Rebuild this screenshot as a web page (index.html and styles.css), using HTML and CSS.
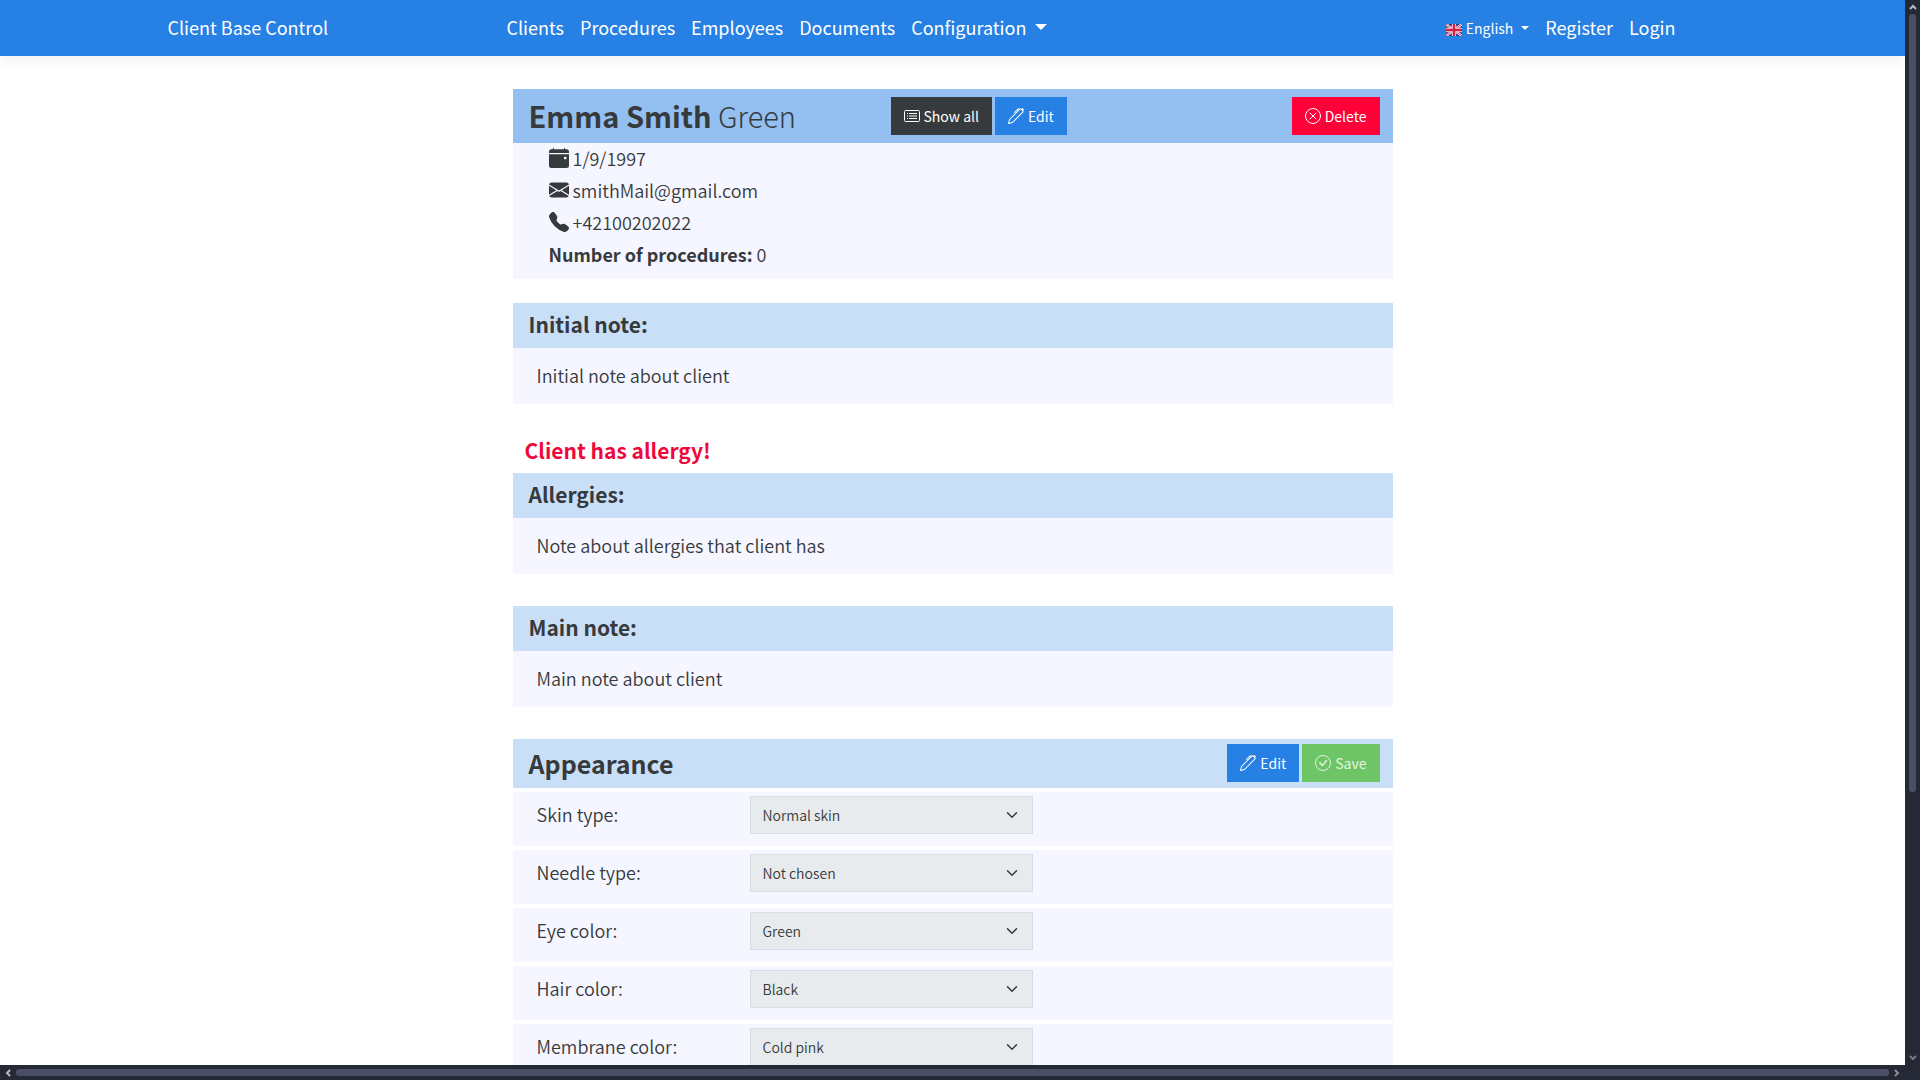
FILE: index.html
```html
<!DOCTYPE html>
<html lang="en">
<head>
<meta charset="utf-8">
<title>Client Base Control</title>
<link rel="stylesheet" href="styles.css">
</head>
<body>
<svg class="sprite" aria-hidden="true">
  <symbol id="calendar" viewBox="0 0 16 16"><path d="M4 .5a.5.5 0 0 0-1 0V1H2a2 2 0 0 0-2 2v1h16V3a2 2 0 0 0-2-2h-1V.5a.5.5 0 0 0-1 0V1H4V.5zM16 14V5H0v9a2 2 0 0 0 2 2h12a2 2 0 0 0 2-2zm-3.500-7h1a.5.5 0 0 1 .5.5v1a.5.5 0 0 1-.5.5h-1a.5.5 0 0 1-.5-.5v-1a.5.5 0 0 1 .5-.5z"/></symbol>
  <symbol id="envelope" viewBox="0 0 16 16"><path d="M.05 3.555A2 2 0 0 1 2 2h12a2 2 0 0 1 1.950 1.555L8 8.414.05 3.555zM0 4.697v7.104l5.803-3.558L0 4.697zM6.761 8.830l-6.570 4.027A2 2 0 0 0 2 14h12a2 2 0 0 0 1.808-1.144l-6.570-4.027L8 9.586l-1.239-.757zm3.436-.586L16 11.801V4.697l-5.803 3.546z"/></symbol>
  <symbol id="phone" viewBox="0 0 16 16"><path d="M1.885.511a1.745 1.745 0 0 1 2.610.163L6.290 2.980c.329.423.445.974.315 1.494l-.547 2.190a.678.678 0 0 0 .178.643l2.457 2.457a.678.678 0 0 0 .644.178l2.189-.547a1.745 1.745 0 0 1 1.494.315l2.306 1.794c.829.645.905 1.870.163 2.611l-1.034 1.034c-.74.74-1.846 1.065-2.877.702a18.634 18.634 0 0 1-7.010-4.420 18.634 18.634 0 0 1-4.420-7.009c-.362-1.030-.037-2.137.703-2.877L1.885.511z"/></symbol>
  <symbol id="list" viewBox="0 0 16 16"><rect x=".5" y="2.500" width="15" height="11" rx="1" fill="none" stroke="currentColor"/><path d="M5 5.500h8M5 8h8M5 10.500h8M3 5.500h1M3 8h1M3 10.500h1" stroke="currentColor"/></symbol>
  <symbol id="pen" viewBox="0 0 16 16"><path d="m13.498.795.149-.149a1.207 1.207 0 1 1 1.707 1.708l-.149.148a1.500 1.500 0 0 1-.059 2.059L4.854 14.854a.5.5 0 0 1-.233.131l-4 1a.5.5 0 0 1-.606-.606l1-4a.5.5 0 0 1 .131-.232l9.642-9.642a.5.5 0 0 0-.642.056L6.854 4.854a.5.5 0 1 1-.708-.708L9.440.854A1.500 1.500 0 0 1 11.500.796a1.500 1.500 0 0 1 1.998-.001zm-.644.766a.5.5 0 0 0-.707 0L1.950 11.756l-.764 3.057 3.057-.764L14.440 3.854a.5.5 0 0 0 0-.708l-1.585-1.585z"/></symbol>
  <symbol id="cross" viewBox="0 0 16 16"><g fill="none" stroke="currentColor" stroke-linecap="round"><circle cx="8" cy="8" r="7.500"/><path d="M5 5l6 6M11 5l-6 6"/></g></symbol>
  <symbol id="check" viewBox="0 0 16 16"><circle cx="8" cy="8" r="7.500" fill="none" stroke="currentColor"/><path d="M10.970 4.970a.235.235 0 0 0-.02.022L7.477 9.417 5.384 7.323a.75.75 0 0 0-1.060 1.060L6.970 11.030a.75.75 0 0 0 1.079-.02l3.992-4.990a.75.75 0 0 0-1.071-1.050z"/></symbol>
  <symbol id="up" viewBox="0 0 8 6"><path d="M1 5l3-3 3 3" fill="none" stroke="currentColor" stroke-width="2"/></symbol>
  <symbol id="flag" viewBox="0 0 16 12"><path fill="#1b2a78" d="M0 0h16v12H0z"/><path d="M0 0l16 12M16 0L0 12" stroke="#f3dbe4" stroke-width="2.600"/><path d="M0 0l16 12M16 0L0 12" stroke="#d8506c" stroke-width="1"/><path d="M8 0v12M0 6h16" stroke="#f3dbe4" stroke-width="4.400"/><path d="M8 0v12M0 6h16" stroke="#d6203f" stroke-width="2.400"/></symbol>
</svg>
<div class="window">
  <div class="page">
    <header class="navbar">
      <div class="navbar-inner">
        <a class="brand" href="#">Client Base Control</a>
        <nav class="menu">
          <a href="#">Clients</a>
          <a href="#">Procedures</a>
          <a href="#">Employees</a>
          <a href="#">Documents</a>
          <button class="toggle" type="button">Configuration<span class="caret"></span></button>
        </nav>
        <div class="menu account">
          <button class="toggle language" type="button"><svg class="flag"><use href="#flag"/></svg>English<span class="caret"></span></button>
          <a href="#">Register</a>
          <a href="#">Login</a>
        </div>
      </div>
    </header>
    <main class="content">
      <section class="client">
        <div class="client-head">
          <h1><strong>Emma Smith</strong> Green</h1>
          <div class="actions">
            <button class="btn dark" type="button"><svg><use href="#list"/></svg>Show all</button>
            <button class="btn primary" type="button"><svg><use href="#pen"/></svg>Edit</button>
          </div>
          <button class="btn danger" type="button"><svg><use href="#cross"/></svg>Delete</button>
        </div>
        <ul class="contact">
          <li><svg><use href="#calendar"/></svg>1/9/1997</li>
          <li><svg><use href="#envelope"/></svg>smithMail@gmail.com</li>
          <li><svg><use href="#phone"/></svg>+42100202022</li>
          <li><span><strong>Number of procedures:</strong> 0</span></li>
        </ul>
      </section>
      <section class="note">
        <h2>Initial note:</h2>
        <p>Initial note about client</p>
      </section>
      <p class="alert">Client has allergy!</p>
      <section class="note">
        <h2>Allergies:</h2>
        <p>Note about allergies that client has</p>
      </section>
      <section class="note">
        <h2>Main note:</h2>
        <p>Main note about client</p>
      </section>
      <form class="appearance">
        <div class="appearance-head">
          <h2>Appearance</h2>
          <div class="actions">
            <button class="btn primary" type="button"><svg><use href="#pen"/></svg>Edit</button>
            <button class="btn success" type="button" disabled><svg><use href="#check"/></svg>Save</button>
          </div>
        </div>
        <div class="row"><label for="skin">Skin type:</label><select id="skin" disabled><option>Normal skin</option></select></div>
        <div class="row"><label for="needle">Needle type:</label><select id="needle" disabled><option>Not chosen</option></select></div>
        <div class="row"><label for="eye">Eye color:</label><select id="eye" disabled><option>Green</option></select></div>
        <div class="row"><label for="hair">Hair color:</label><select id="hair" disabled><option>Black</option></select></div>
        <div class="row"><label for="membrane">Membrane color:</label><select id="membrane" disabled><option>Cold pink</option></select></div>
      </form>
    </main>
  </div>
  <div class="bar vertical" aria-hidden="true">
    <svg><use href="#up"/></svg>
    <div class="track"><div class="thumb"></div></div>
    <svg class="down"><use href="#up"/></svg>
  </div>
  <div class="bar horizontal" aria-hidden="true">
    <svg class="left"><use href="#up"/></svg>
    <div class="track"><div class="thumb"></div></div>
    <svg class="right"><use href="#up"/></svg>
  </div>
</div>
</body>
</html>
```
FILE: styles.css
```css
* { box-sizing: border-box; }

body {
  margin: 0;
  color: #373a3c;
  background: #fff;
  font-family: "Noto Sans CJK JP", "Noto Sans", sans-serif;
  font-size: 18px;
  font-weight: 350;
  line-height: 30px;
}

h1, h2, p, ul { margin: 0; padding: 0; }
ul { list-style: none; }
button, select { font-family: inherit; }
strong { font-weight: 700; }
svg { fill: currentColor; flex: none; }
.sprite { display: none; }

/* Window frame with its scroll bars */
.window {
  display: grid;
  grid-template: minmax(0, 1fr) 15px / minmax(0, 1fr) 15px;
  height: 100vh;
  background: #252835;
}
.page { overflow: hidden; background: #fff; }
.bar { display: flex; align-items: center; gap: 4px; color: #8d8f94; }
.bar svg { width: 8px; height: 6px; }
.track { flex: 1; display: flex; }
.thumb { background: #4b4f66; border-radius: 3px; }
.vertical { flex-direction: column; padding: 4px 0; color: #b9bbc0; }
.vertical .thumb { width: 7px; height: 75%; }
.vertical .down { color: #777a80; }
.horizontal { padding: 0 4px; }
.horizontal .left { color: #b9bbc0; }
.horizontal .thumb { width: 100%; height: 7px; }
.down { transform: rotate(180deg); }
.left { transform: rotate(-90deg); }
.right { transform: rotate(90deg); }

/* Navigation */
.navbar {
  background: #2780e3;
  color: #fff;
  box-shadow: 0 4px 12px rgba(0, 0, 0, .06);
}
.navbar-inner {
  display: flex;
  align-items: center;
  max-width: 1600px;
  height: 56px;
  margin: 0 auto;
  padding: 0 77px 2px 15px;
}
.navbar a { color: inherit; text-decoration: none; }
.navbar a, .toggle { font-size: 18px; font-weight: 400; line-height: 30px; }
.brand { flex: 0 0 339px; }
.menu { display: flex; align-items: center; gap: 16px; }
.account { margin-left: auto; }
.toggle {
  display: flex;
  align-items: center;
  padding: 0;
  border: 0;
  background: none;
  color: inherit;
}
.caret {
  margin-left: 9px;
  border: 6px solid transparent;
  border-top-color: currentColor;
  border-bottom: 0;
}
.navbar .language { padding-top: 2px; font-size: 14px; }
.language .caret { margin-left: 8px; border-width: 4px 4px 0; }
.flag { width: 16px; height: 12px; margin: 3px 4px 0 0; }

/* Client card */
.content { max-width: 880px; margin: 33px auto 0; }
.client { margin-bottom: 24px; background: #f5f6ff; }
.client-head {
  display: grid;
  grid-template-columns: 362px 1fr auto;
  align-items: center;
  height: 54px;
  padding: 0 13px 0 16px;
  background: #93bff1;
}
h1 { padding-bottom: 2px; font-size: 29px; font-weight: 300; }
.contact { padding: 0 36px 8px; }
.contact li { display: flex; align-items: center; gap: 4px; padding-bottom: 2px; }
.contact svg { width: 20px; height: 20px; }

.actions { display: flex; gap: 3px; }
.btn {
  display: flex;
  align-items: center;
  gap: 4px;
  height: 38px;
  padding: 0 13px;
  border: 0;
  color: #fff;
  font-size: 14px;
  font-weight: 400;
}
.btn svg { width: 16px; height: 16px; }
.dark { background: #373a3c; }
.primary { background: #2780e3; }
.danger { background: #ff0039; }
.success { background: #6ec566; color: #e2f3e0; }

/* Notes */
.note { margin-bottom: 32px; background: #f5f6ff; }
.note h2 {
  height: 45px;
  padding: 0 16px;
  background: #c9dff7;
  font-size: 21px;
  line-height: 43px;
}
.note p { padding: 12px 24px 14px; }
.alert {
  padding: 0 12px;
  margin-bottom: 9px;
  color: #f0083c;
  font-size: 21px;
  font-weight: 700;
  line-height: 28px;
}

/* Appearance form */
.appearance-head {
  display: flex;
  justify-content: space-between;
  align-items: center;
  height: 49px;
  padding: 0 13px 1px 16px;
  background: #c9dff7;
}
.appearance-head h2 { font-size: 25px; }
.row {
  display: grid;
  grid-template-columns: 213px 283px;
  align-items: start;
  height: 54px;
  margin-top: 4px;
  padding: 4px 24px;
  background: #f5f6ff;
}
.row label { line-height: 36px; }
select {
  height: 38px;
  padding: 0 12px;
  border: 1px solid #d9dde4;
  border-radius: 0;
  appearance: none;
  color: #373a3c;
  opacity: 1;
  font-size: 14px;
  font-weight: 350;
  background: #e8ebed url("data:image/svg+xml,%3Csvg xmlns='http://www.w3.org/2000/svg' viewBox='0 0 16 16'%3E%3Cpath fill='none' stroke='%23373a3c' stroke-linecap='round' stroke-linejoin='round' stroke-width='2' d='M2 5l6 6 6-6'/%3E%3C/svg%3E") no-repeat right 14px center / 12px;
}
```
